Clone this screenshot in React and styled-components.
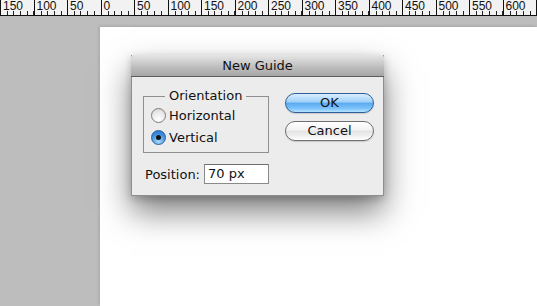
import styled, { createGlobalStyle } from 'styled-components'

const Global = createGlobalStyle`
  html, body { margin: 0; padding: 0; }
  body {
    width: 537px;
    height: 306px;
    overflow: hidden;
    background: #bdbdbd;
    font-family: "DejaVu Sans", "Liberation Sans", sans-serif;
  }
`

const Page = styled.div`
  position: relative;
  width: 537px;
  height: 306px;
  display: flex;
  flex-direction: column;
`

const Ruler = styled.div`
  display: flex;
  height: 15px;
  background: #f2f2f2;
  border-bottom: 1px solid #111;
  overflow: hidden;
  flex-shrink: 0;
`

const Segment = styled.div`
  flex: 0 0 33.5px;
  height: 15px;
  box-sizing: border-box;
  border-left: 1px solid #111;
  background-image: repeating-linear-gradient(
    to right,
    transparent 0,
    transparent 5.7px,
    #222 5.7px,
    #222 6.7px
  );
  background-size: 100% 4px;
  background-position: 0 100%;
  background-repeat: no-repeat;
  font-family: "Liberation Sans", Arial, sans-serif;
  font-size: 12px;
  line-height: 11px;
  color: #111;
  padding-left: 2px;
  padding-top: 1px;
`

const Workspace = styled.div`
  flex: 1;
  display: flex;
  padding: 11px 0 0 100px;
`

const Canvas = styled.div`
  flex: 1;
  background: #fff;
  box-shadow: -1px -1px 3px rgba(0, 0, 0, 0.12);
`

const Dialog = styled.div`
  position: absolute;
  left: 131px;
  top: 55px;
  width: 253px;
  background: #ececec;
  border: 1px solid #8e8e8e;
  border-top: none;
  box-sizing: border-box;
  box-shadow: 0 16px 30px rgba(0, 0, 0, 0.5), 0 3px 8px rgba(0, 0, 0, 0.2);
`

const TitleBar = styled.div`
  height: 21px;
  border-bottom: 1px solid #5d5d5d;
  background: linear-gradient(#e6e6e6, #bcbcbc 60%, #a6a6a6);
  text-align: center;
  font-size: 13px;
  line-height: 22px;
  color: #111;
  margin: 0 -1px;
  border-radius: 3px 3px 0 0;
`

const Body = styled.div`
  display: flex;
  padding: 11px 10px 10px 11px;
  height: 118px;
  box-sizing: border-box;
`

const LeftCol = styled.div`
  display: flex;
  flex-direction: column;
  width: 126px;
`

const Fieldset = styled.fieldset`
  margin: 0;
  padding: 0 0 4px 7px;
  border: 1px solid #8f8f8f;
  width: 126px;
  box-sizing: border-box;
`

const Legend = styled.legend`
  margin-left: 14px;
  padding: 0 4px;
  font-size: 13px;
  line-height: 16px;
  color: #111;
`

const RadioRow = styled.label`
  display: flex;
  align-items: center;
  height: 22px;
  gap: 3px;
  font-size: 13px;
  color: #111;
`

const RadioDot = styled.span`
  width: 15px;
  height: 15px;
  border-radius: 50%;
  box-sizing: border-box;
  display: flex;
  align-items: center;
  justify-content: center;
  border: 1px solid ${p => (p.$on ? '#2b5f9e' : '#7e7e7e')};
  background: ${p =>
    p.$on
      ? 'radial-gradient(circle at 50% 80%, #a9dcff, #3d8fe0 60%, #2a6cc0)'
      : 'radial-gradient(circle at 50% 80%, #ffffff, #e8e8e8 60%, #cfcfcf)'};
  &::after {
    content: '';
    display: ${p => (p.$on ? 'block' : 'none')};
    width: 5px;
    height: 5px;
    border-radius: 50%;
    background: #111;
  }
`

const PositionRow = styled.div`
  display: flex;
  align-items: center;
  margin-top: 11px;
  gap: 4px;
  padding-left: 2px;
  font-size: 13px;
  color: #111;
`

const Input = styled.div`
  width: 67px;
  height: 20px;
  box-sizing: border-box;
  border: 1px solid #8a8a8a;
  border-top-color: #6e6e6e;
  background: #fff;
  font-size: 13px;
  line-height: 18px;
  padding-left: 3px;
  margin-left: auto;
`

const RightCol = styled.div`
  display: flex;
  flex-direction: column;
  gap: 8px;
  margin-left: 16px;
  padding-top: 5px;
`

const Button = styled.button`
  width: 89px;
  height: 20px;
  border-radius: 10px;
  font-family: inherit;
  font-size: 13px;
  color: #111;
  padding: 0;
  line-height: 18px;
  border: 1px solid ${p => (p.$primary ? '#2f5f9a' : '#6f6f6f')};
  background: ${p =>
    p.$primary
      ? 'linear-gradient(#d8eefe, #9fd0f8 45%, #5aaaf0 50%, #7cc2fb 80%, #b6e4ff)'
      : 'linear-gradient(#ffffff, #f3f3f3 45%, #e3e3e3 50%, #f2f2f2 80%, #ffffff)'};
  box-shadow: 0 1px 1px rgba(0, 0, 0, 0.15);
`

const marks = [150, 100, 50, 0, 50, 100, 150, 200, 250, 300, 350, 400, 450, 500, 550, 600, '']

export default function App() {
  return (
    <Page>
      <Global />
      <Ruler>
        {marks.map((m, i) => (
          <Segment key={i}>{m}</Segment>
        ))}
      </Ruler>
      <Workspace>
        <Canvas />
      </Workspace>
      <Dialog>
        <TitleBar>New Guide</TitleBar>
        <Body>
          <LeftCol>
            <Fieldset>
              <Legend>Orientation</Legend>
              <RadioRow>
                <RadioDot />
                Horizontal
              </RadioRow>
              <RadioRow>
                <RadioDot $on />
                Vertical
              </RadioRow>
            </Fieldset>
            <PositionRow>
              Position:
              <Input>70 px</Input>
            </PositionRow>
          </LeftCol>
          <RightCol>
            <Button $primary>OK</Button>
            <Button>Cancel</Button>
          </RightCol>
        </Body>
      </Dialog>
    </Page>
  )
}
